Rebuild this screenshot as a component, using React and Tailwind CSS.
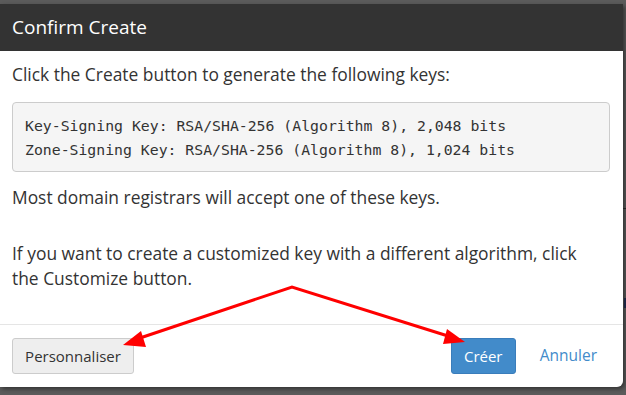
import React from 'react';

export default function App() {
  return (
    <div className="relative w-[626px] h-[395px] overflow-hidden bg-[#5b5b5b] pt-[4px] font-['Open_Sans',sans-serif]">
      {/* background page bits peeking out on the right */}
      <span className="absolute right-0 top-[208px] w-[3px] h-[1px] bg-[#222]" />
      <span className="absolute right-0 top-[298px] w-[2px] h-[10px] bg-[#1c2440]" />

      <div className="w-[623px] h-[383px] bg-white rounded-br-[6px] flex flex-col shadow-[2px_2px_4px_rgba(0,0,0,0.45)]">
        <div className="h-[47px] bg-[#333333] px-[12px] flex items-center">
          <h2 className="text-white text-[19px] leading-none">Confirm Create</h2>
        </div>

        <div className="px-[12px] pt-[11px] text-[#333] text-[17.4px] leading-[25px]">
          <p>Click the Create button to generate the following keys:</p>
          <pre className="mt-[15px] h-[70px] w-[598px] bg-[#f5f5f5] border border-[#cccccc] rounded-[4px] px-[12px] pt-[11px] font-['DejaVu_Sans_Mono',monospace] text-[14.8px] leading-[24px] text-[#333]">
{`Key-Signing Key: RSA/SHA-256 (Algorithm 8), 2,048 bits
Zone-Signing Key: RSA/SHA-256 (Algorithm 8), 1,024 bits`}
          </pre>
          <p className="mt-[13px]">Most domain registrars will accept one of these keys.</p>
          <p className="mt-[31px] w-[590px]">
            If you want to create a customized key with a different algorithm, click the Customize button.
          </p>
        </div>

        <div className="mt-auto h-[63px] border-t border-[#e5e5e5] px-[12px] flex items-center">
          <button className="h-[36px] w-[122px] bg-[#eeeeee] border border-[#cccccc] rounded-[3px] text-[15px] text-[#333]">
            Personnaliser
          </button>
          <div className="ml-auto flex items-center gap-[24px] pr-[14px]">
            <button className="h-[36px] w-[65px] bg-[#428bca] border border-[#3a7dbb] rounded-[3px] text-[15px] text-white">
              Créer
            </button>
            <span className="text-[15.5px] text-[#428bca]">Annuler</span>
          </div>
        </div>
      </div>

      <svg className="absolute inset-0 pointer-events-none" width="626" height="395" viewBox="0 0 626 395">
        <polyline points="140,338 292,287 448,336" fill="none" stroke="#ff0000" strokeWidth="3" strokeLinejoin="miter" />
        <polygon points="123,345 141,331 146,347" fill="#ff0000" />
        <polygon points="465,342 447,329 443,344" fill="#ff0000" />
      </svg>
    </div>
  );
}
